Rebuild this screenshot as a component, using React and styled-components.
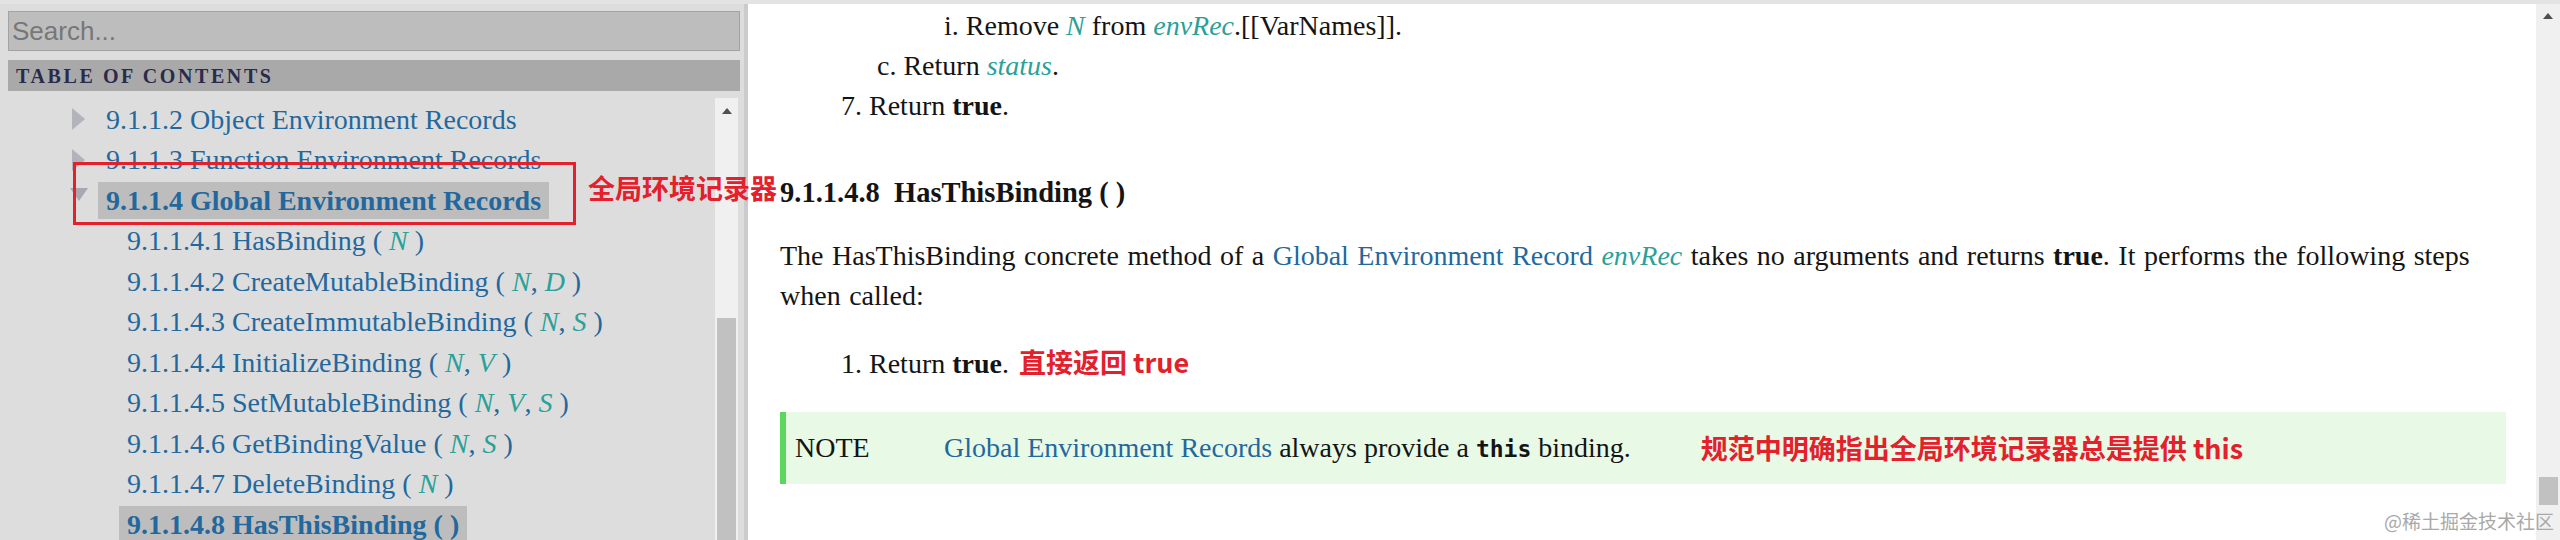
import React from "react";
import styled, { createGlobalStyle, css } from "styled-components";

const COLORS = {
  SIDEBAR: "#dddddd",
  ACTIVE: "#bdbdbd",
  LINK: "#23689d",
  VAR: "#2aa198",
  TEXT: "#141414",
  RED: "#e3202c",
  NOTE_BG: "#e8f9e6",
  NOTE_BORDER: "#5cd65c",
  TRACK: "#f0f0f0",
  THUMB: "#c1c1c1",
};

const SERIF = `"Liberation Serif", "Times New Roman", serif`;
const CJK = `"Noto Sans CJK SC", "Noto Sans", sans-serif`;

const GlobalStyle = createGlobalStyle`
  *, *::before, *::after {
    box-sizing: border-box;
  }

  html, body {
    margin: 0;
    padding: 0;
    overflow: hidden;
  }

  body {
    background: #fff;
    font-family: ${SERIF};
    color: ${COLORS.TEXT};
  }
`;

const Page = styled.div`
  position: relative;
  width: 2560px;
  height: 540px;
  overflow: hidden;
  display: flex;
  flex-direction: column;
  background: #e3e3e3;
`;

const TopStrip = styled.div`
  flex: none;
  height: 4px;
  background: #e3e3e3;
`;

const Main = styled.div`
  flex: 1;
  min-height: 0;
  display: flex;
`;

const Sidebar = styled.nav`
  flex: none;
  width: 748px;
  display: flex;
  flex-direction: column;
  padding: 7px 4px 0 8px;
  background: ${COLORS.SIDEBAR};
  border-right: 4px solid #cbcbcb;
`;

const SearchBox = styled.input`
  flex: none;
  width: 100%;
  height: 40px;
  padding: 0 3px;
  background: #bdbdbd;
  border: 1px solid #a2a2a2;
  font-family: "Liberation Sans", Arial, sans-serif;
  font-size: 26px;
  outline: none;

  &::placeholder {
    color: #777;
  }
`;

const TocHeader = styled.div`
  flex: none;
  margin-top: 9px;
  height: 31px;
  padding-left: 8px;
  background: #a9a9a9;
  color: #2a2b4b;
  font-family: ${SERIF};
  font-weight: bold;
  font-size: 20px;
  letter-spacing: 2.6px;
  line-height: 32px;
`;

const TocBody = styled.div`
  flex: 1;
  min-height: 0;
  margin-top: 7px;
  display: flex;
`;

const TocList = styled.ul`
  flex: 1;
  margin: 0;
  padding: 1px 0 0;
  list-style: none;
  overflow: hidden;
`;

const TocRow = styled.li`
  height: 40.5px;
  display: flex;
  align-items: center;
  padding-left: ${(p) => (p.$level === 1 ? 64 : 111)}px;
  white-space: nowrap;
`;

const Toggle = styled.span`
  flex: none;
  width: 26px;
  height: 24px;
  display: flex;
  align-items: center;

  &::before {
    content: "";
    display: block;
    ${(p) =>
      p.$open
        ? css`
            margin: -12px 0 0 -2px;
            border-top: 13px solid #a8a8b0;
            border-left: 9px solid transparent;
            border-right: 9px solid transparent;
          `
        : css`
            border-left: 13px solid #b3b3bb;
            border-top: 11.5px solid transparent;
            border-bottom: 11.5px solid transparent;
          `}
  }
`;

const TocLink = styled.a`
  display: inline-block;
  padding: 0 8px;
  line-height: 37px;
  font-size: 28px;
  color: ${COLORS.LINK};
  text-decoration: none;
  ${(p) =>
    p.$active &&
    css`
      background: ${COLORS.ACTIVE};
      font-weight: bold;
    `}
`;

const Var = styled.var`
  font-style: italic;
  color: ${COLORS.VAR};
`;

const ScrollTrack = styled.div`
  flex: none;
  width: 23px;
  margin-right: 2px;
  display: flex;
  flex-direction: column;
  align-items: center;
  background: ${COLORS.TRACK};
`;

const ScrollArrow = styled.span`
  flex: none;
  margin-top: ${(p) => p.$top}px;
  border-bottom: 6px solid #505050;
  border-left: 5.5px solid transparent;
  border-right: 5.5px solid transparent;
`;

const ScrollThumb = styled.div`
  flex: none;
  margin-top: auto;
  margin-bottom: ${(p) => p.$bottom}px;
  width: 19px;
  height: ${(p) => p.$height}px;
  background: ${COLORS.THUMB};
`;

const Content = styled.main`
  flex: 1;
  min-width: 0;
  padding: 2px 30px 0 32px;
  background: #fff;
  font-size: 28px;
  line-height: 40px;
  overflow: hidden;
`;

const Step = styled.div`
  padding-left: ${(p) => p.$indent}px;
  margin-top: ${(p) => p.$top || 0}px;
  white-space: nowrap;
`;

const Heading = styled.h4`
  margin: 47px 0 0;
  font-size: 28.5px;
  font-weight: bold;
  line-height: 40px;
  white-space: pre;
`;

const Para = styled.p`
  margin: 23px 0 0;
  word-spacing: 1.5px;
  white-space: nowrap;
`;

const Link = styled.a`
  color: ${COLORS.LINK};
  text-decoration: none;
`;

const Note = styled.div`
  margin-top: 28px;
  height: 72px;
  display: flex;
  align-items: center;
  padding-left: 9px;
  background: ${COLORS.NOTE_BG};
  border-left: 6px solid ${COLORS.NOTE_BORDER};
  white-space: nowrap;
`;

const NoteLabel = styled.span`
  flex: none;
  width: 149px;
`;

const Code = styled.code`
  font-family: "DejaVu Sans Mono", "Liberation Mono", monospace;
  font-weight: bold;
  font-size: 23px;
`;

const Remark = styled.span`
  margin-left: ${(p) => p.$gap}px;
  color: ${COLORS.RED};
  font-family: ${CJK};
  font-weight: bold;
  font-size: 27px;
  word-spacing: 0;
`;

const PageScrollbar = styled.div`
  flex: none;
  width: 24px;
  display: flex;
  flex-direction: column;
  align-items: center;
  background: ${COLORS.TRACK};
`;

const AnnotationBox = styled.div`
  position: absolute;
  left: 73px;
  top: 162px;
  width: 503px;
  height: 63px;
  border: 3px solid ${COLORS.RED};
  pointer-events: none;
`;

const AnnotationLabel = styled.span`
  position: absolute;
  left: 588px;
  top: 170px;
  color: ${COLORS.RED};
  font-family: ${CJK};
  font-weight: bold;
  font-size: 27px;
  line-height: 36px;
  white-space: nowrap;
`;

const Watermark = styled.span`
  position: absolute;
  right: 6px;
  bottom: 6px;
  color: #a9a9a9;
  font-family: ${CJK};
  font-size: 19px;
  white-space: nowrap;
`;

const TOC = [
  { level: 1, num: "9.1.1.2", title: "Object Environment Records", toggle: "closed" },
  { level: 1, num: "9.1.1.3", title: "Function Environment Records", toggle: "closed" },
  { level: 1, num: "9.1.1.4", title: "Global Environment Records", toggle: "open", active: true },
  { level: 2, num: "9.1.1.4.1", title: "HasBinding", args: ["N"] },
  { level: 2, num: "9.1.1.4.2", title: "CreateMutableBinding", args: ["N", "D"] },
  { level: 2, num: "9.1.1.4.3", title: "CreateImmutableBinding", args: ["N", "S"] },
  { level: 2, num: "9.1.1.4.4", title: "InitializeBinding", args: ["N", "V"] },
  { level: 2, num: "9.1.1.4.5", title: "SetMutableBinding", args: ["N", "V", "S"] },
  { level: 2, num: "9.1.1.4.6", title: "GetBindingValue", args: ["N", "S"] },
  { level: 2, num: "9.1.1.4.7", title: "DeleteBinding", args: ["N"] },
  { level: 2, num: "9.1.1.4.8", title: "HasThisBinding", args: [], active: true },
];

const Args = ({ names }) => (
  <>
    {" ( "}
    {names.map((n, i) => (
      <React.Fragment key={n + i}>
        {i > 0 && ", "}
        <Var>{n}</Var>
      </React.Fragment>
    ))}
    {names.length ? " )" : ")"}
  </>
);

const TocItem = ({ item }) => (
  <TocRow $level={item.level}>
    {item.toggle && <Toggle $open={item.toggle === "open"} />}
    <TocLink $active={item.active}>
      {item.num} {item.title}
      {item.args && <Args names={item.args} />}
    </TocLink>
  </TocRow>
);

const App = () => (
  <Page>
    <GlobalStyle />
    <TopStrip />
    <Main>
      <Sidebar>
        <SearchBox placeholder="Search..." />
        <TocHeader>TABLE OF CONTENTS</TocHeader>
        <TocBody>
          <TocList>
            {TOC.map((item) => (
              <TocItem key={item.num} item={item} />
            ))}
          </TocList>
          <ScrollTrack>
            <ScrollArrow $top={10} />
            <ScrollThumb $height={222} $bottom={0} />
          </ScrollTrack>
        </TocBody>
      </Sidebar>

      <Content>
        <Step $indent={164}>
          i. Remove <Var>N</Var> from <Var>envRec</Var>.[[VarNames]].
        </Step>
        <Step $indent={97}>
          c. Return <Var>status</Var>.
        </Step>
        <Step $indent={61}>
          7. Return <b>true</b>.
        </Step>

        <Heading>{"9.1.1.4.8  HasThisBinding ( )"}</Heading>
        <Para>
          The HasThisBinding concrete method of a <Link>Global Environment Record</Link>{" "}
          <Var>envRec</Var> takes no arguments and returns <b>true</b>. It performs the
          following steps
          <br />
          when called:
        </Para>

        <Step $indent={61} $top={26}>
          1. Return <b>true</b>.
          <Remark $gap={10}>直接返回 true</Remark>
        </Step>

        <Note>
          <NoteLabel>NOTE</NoteLabel>
          <span>
            <Link>Global Environment Records</Link> always provide a <Code>this</Code> binding.
          </span>
          <Remark $gap={70}>规范中明确指出全局环境记录器总是提供 this</Remark>
        </Note>
      </Content>

      <PageScrollbar>
        <ScrollArrow $top={9} />
        <ScrollThumb $height={28} $bottom={35} />
      </PageScrollbar>
    </Main>

    <AnnotationBox />
    <AnnotationLabel>全局环境记录器</AnnotationLabel>
    <Watermark>@稀土掘金技术社区</Watermark>
  </Page>
);

export default App;
